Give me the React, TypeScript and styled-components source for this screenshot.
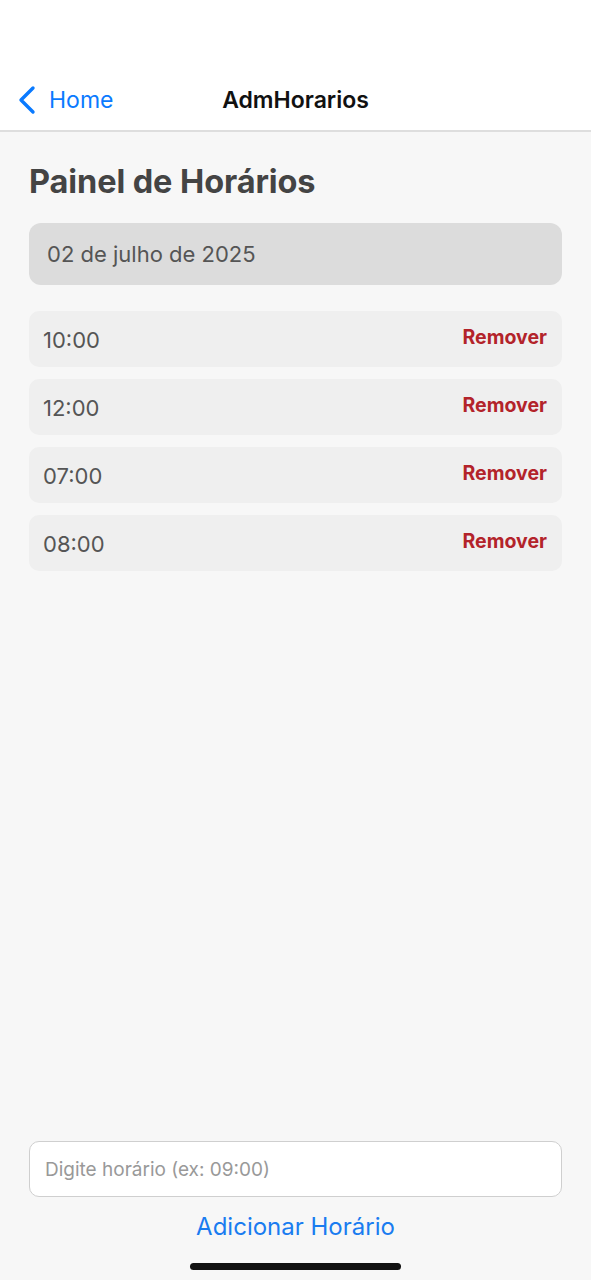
import styled, { createGlobalStyle } from "styled-components";

const GlobalStyle = createGlobalStyle`
  html, body {
    margin: 0;
    padding: 0;
    background: #f7f7f7;
  }
  * {
    box-sizing: border-box;
  }
  body {
    font-family: Inter, "Noto Sans", sans-serif;
  }
`;

const Screen = styled.div`
  width: 591px;
  height: 1280px;
  display: flex;
  flex-direction: column;
  background: #f7f7f7;
`;

const NavBar = styled.header`
  height: 132px;
  padding-top: 72px;
  background: #fff;
  border-bottom: 2px solid #dedede;
  display: grid;
  grid-template-columns: 1fr auto 1fr;
  align-items: start;
`;

const BackButton = styled.div`
  display: flex;
  align-items: center;
  gap: 13px;
  padding-left: 18px;
  height: 56px;
  color: #0a7aff;
  font-size: 23px;
`;

const NavTitle = styled.div`
  height: 56px;
  display: flex;
  align-items: center;
  font-size: 23px;
  font-weight: 600;
  color: #111;
`;

const Content = styled.main`
  flex: 1;
  display: flex;
  flex-direction: column;
  padding: 0 29px;
`;

const Heading = styled.h1`
  margin: 30px 0 22px;
  height: 39px;
  line-height: 39px;
  font-size: 32.5px;
  font-weight: 700;
  color: #444;
  letter-spacing: -0.1px;
`;

const DateBox = styled.div`
  height: 62px;
  border-radius: 12px;
  background: #dcdcdc;
  display: flex;
  align-items: center;
  padding: 0 18px;
  font-size: 22px;
  color: #555;
  margin-bottom: 26px;
`;

const List = styled.div`
  display: flex;
  flex-direction: column;
  gap: 12px;
`;

const Row = styled.div`
  height: 56px;
  border-radius: 10px;
  background: #efefef;
  display: flex;
  align-items: center;
  justify-content: space-between;
  padding: 0 15px 0 14px;
`;

const Time = styled.span`
  font-size: 22px;
  color: #555;
  padding-top: 2px;
`;

const RemoveButton = styled.span`
  font-size: 19.5px;
  font-weight: 700;
  color: #b3232a;
  margin-top: -4px;
`;

const Footer = styled.div`
  margin-top: auto;
  display: flex;
  flex-direction: column;
  align-items: stretch;
`;

const Input = styled.input`
  height: 56px;
  border: 1.5px solid #cfcfcf;
  border-radius: 10px;
  background: #fff;
  padding: 0 15px;
  font-family: inherit;
  font-size: 19px;
  color: #333;
  outline: none;

  &::placeholder {
    color: #999;
  }
`;

const AddButton = styled.button`
  margin-top: 12px;
  align-self: center;
  border: none;
  background: none;
  font-family: inherit;
  font-size: 24px;
  color: #1a7cf0;
  padding: 0;
  height: 34px;
`;

const HomeIndicator = styled.div`
  align-self: center;
  width: 211px;
  height: 7px;
  border-radius: 4px;
  background: #111;
  margin: 20px 0 10px;
`;

const times = ["10:00", "12:00", "07:00", "08:00"];

export default function App() {
  return (
    <Screen>
      <GlobalStyle />
      <NavBar>
        <BackButton>
          <svg width="18" height="30" viewBox="0 0 18 30" fill="none">
            <path
              d="M15 3L3 15l12 12"
              stroke="#0a7aff"
              strokeWidth="3.4"
              strokeLinecap="round"
              strokeLinejoin="round"
            />
          </svg>
          Home
        </BackButton>
        <NavTitle>AdmHorarios</NavTitle>
        <div />
      </NavBar>
      <Content>
        <Heading>Painel de Horários</Heading>
        <DateBox>02 de julho de 2025</DateBox>
        <List>
          {times.map((t) => (
            <Row key={t}>
              <Time>{t}</Time>
              <RemoveButton>Remover</RemoveButton>
            </Row>
          ))}
        </List>
        <Footer>
          <Input placeholder="Digite horário (ex: 09:00)" />
          <AddButton>Adicionar Horário</AddButton>
          <HomeIndicator />
        </Footer>
      </Content>
    </Screen>
  );
}
